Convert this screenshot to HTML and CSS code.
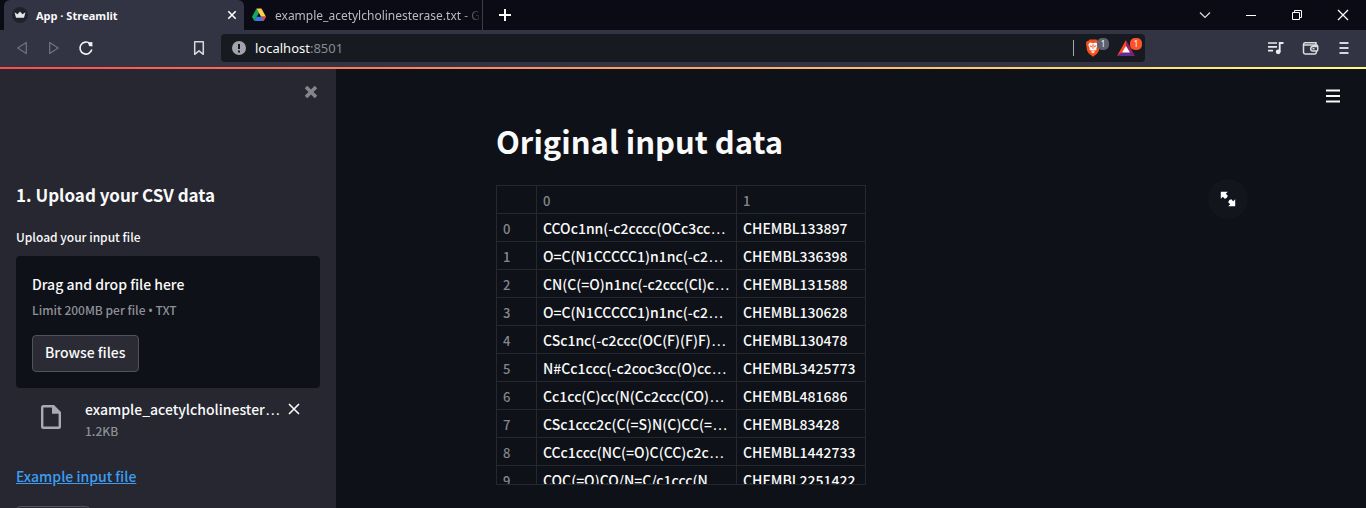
FILE: index.html
```html
<!DOCTYPE html>
<html lang="en">
<head>
<meta charset="utf-8">
<title>App · Streamlit</title>
<link rel="stylesheet" href="styles.css">
</head>
<body>
<header class="browser">
  <div class="tabstrip">
    <div class="tab tab-active">
      <svg class="favicon" width="16" height="16" viewBox="0 0 16 16"><circle cx="8" cy="8" r="8" fill="#20222b"/><path d="M2.500 5.200l3 2.100L8 4.500l2.500 2.800 3-2.100L12 10.800H4z" fill="#e4e4e8"/></svg>
      <span class="tab-title">App · Streamlit</span>
      <button class="icon-btn tab-close" aria-label="Close tab"><svg width="10" height="10" viewBox="0 0 10 10"><path d="M1.300 1.300l7.400 7.400M8.700 1.300L1.300 8.700" stroke="#fff" stroke-width="1.600"/></svg></button>
    </div>
    <div class="tab tab-idle">
      <svg class="favicon" width="16" height="16" viewBox="0 0 16 16"><path d="M5.500 1.500L1 9.700l2.400 4.200 4.600-8z" fill="#11a861"/><path d="M5.500 1.500h4.900L15 9.700h-4.900z" fill="#ffcf48"/><path d="M5.700 9.700H15l-2.500 4.200H3.400z" fill="#3b78e7"/><path d="M10.100 9.700H15l-2.500 4.200z" fill="#ea4335"/></svg>
      <span class="tab-title">example_acetylcholinesterase.txt - Goo</span>
    </div>
    <button class="icon-btn new-tab" aria-label="New tab"><svg width="14" height="14" viewBox="0 0 14 14"><path d="M7 1v12M1 7h12" stroke="#fff" stroke-width="2"/></svg></button>
    <div class="window-controls">
      <button class="icon-btn" aria-label="Search tabs"><svg width="12" height="12" viewBox="0 0 12 12"><path d="M1 3.500l5 5 5-5" fill="none" stroke="#ddd" stroke-width="1.200"/></svg></button>
      <button class="icon-btn" aria-label="Minimize"><svg width="12" height="12" viewBox="0 0 12 12"><path d="M1 6.500h10" stroke="#fff"/></svg></button>
      <button class="icon-btn" aria-label="Restore"><svg width="12" height="12" viewBox="0 0 12 12"><path d="M1.500 3.500h7v7h-7zM3.500 3.500v-2h7v7h-2" fill="none" stroke="#fff"/></svg></button>
      <button class="icon-btn" aria-label="Close"><svg width="12" height="12" viewBox="0 0 12 12"><path d="M1 1l10 10M11 1L1 11" stroke="#fff" stroke-width="1.300"/></svg></button>
    </div>
  </div>
  <div class="toolbar">
    <div class="nav">
      <button class="icon-btn" aria-label="Back"><svg width="16" height="16" viewBox="0 0 16 16"><path d="M12.300 2.500v11L3.700 8z" fill="none" stroke="#6f717d" stroke-width="1.300" stroke-linejoin="round"/></svg></button>
      <button class="icon-btn" aria-label="Forward"><svg width="16" height="16" viewBox="0 0 16 16"><path d="M3.700 2.500v11L12.300 8z" fill="none" stroke="#6f717d" stroke-width="1.300" stroke-linejoin="round"/></svg></button>
      <button class="icon-btn" aria-label="Reload"><svg width="16" height="16" viewBox="0 0 16 16"><path d="M12 3.600A6 6 0 1 0 13.800 9.500" fill="none" stroke="#f2f2f5" stroke-width="1.600"/><path d="M10 2.600l4.400-.6v4.500l-3.400-.5z" fill="#f2f2f5"/></svg></button>
    </div>
    <button class="icon-btn" aria-label="Bookmark"><svg width="16" height="16" viewBox="0 0 16 16"><path d="M3.700 1.700h8.600v12.600L8 10.800l-4.300 3.500z" fill="none" stroke="#d8d9df" stroke-width="1.500" stroke-linejoin="round"/></svg></button>
    <div class="address">
      <svg width="14" height="14" viewBox="0 0 14 14"><circle cx="7" cy="7" r="7" fill="#a2a4ad"/><path d="M7 3v5M7 9.500v2" stroke="#17191f" stroke-width="2"/></svg>
      <span class="url">localhost<span class="port">:8501</span></span>
      <span class="divider"></span>
      <button class="icon-btn shield" aria-label="Brave Shields"><svg width="16" height="18" viewBox="0 0 16 18"><path d="M4.500.5h7l1.300 1.400 1.500.2.700 2.700-1 6.600-1.800 3.200L8 17.800l-4.200-3.200L2 11.400 1 4.800l.700-2.700 1.500-.2z" fill="#f4511e"/><path d="M4.800 3.600L8 4.200l3.200-.6 1.500 2.200-1.400 3.500.2 1.500-2.200 1.100.6 1L8 14.300l-1.900-1.400.6-1-2.200-1.100.2-1.500-1.400-3.500z" fill="#fff"/><path d="M4.300 6.300l2.800.8-.8 1.500zM11.700 6.300l-2.800.8.8 1.500zM7.400 5.300h1.200L8.400 10h-.8zM6 11l2 .8 2-.8-.700 1.200H6.700z" fill="#f4511e"/></svg><span class="badge">1</span></button>
      <button class="icon-btn rewards" aria-label="Brave Rewards"><svg width="18" height="16" viewBox="0 0 18 16"><path d="M9 0L0 16l9-6z" fill="#ff4724"/><path d="M9 0l9 16-9-6z" fill="#9e1f63"/><path d="M0 16h18l-9-6z" fill="#662d91"/><path d="M9 6l4 6.500H5z" fill="#fff"/></svg><span class="badge badge-alert">1</span></button>
    </div>
    <div class="actions">
      <button class="icon-btn" aria-label="Media"><svg width="18" height="16" viewBox="0 0 18 16"><path d="M2 3h9M2 6.800h9M2 10.700h5" stroke="#ececf0" stroke-width="1.700"/><path d="M13.700 12V3H17.500" fill="none" stroke="#ececf0" stroke-width="1.800"/><circle cx="12.200" cy="11.800" r="2.400" fill="#ececf0"/></svg></button>
      <button class="icon-btn" aria-label="Wallet"><svg width="18" height="16" viewBox="0 0 18 16"><path d="M14 5V2.800H3.200a1.700 1.700 0 0 0-1.700 1.700v7.800A1.700 1.700 0 0 0 3.200 14h9.600a1.500 1.500 0 0 0 1.500-1.500V11M1.700 5h12.800a1.200 1.200 0 0 1 1.200 1.200v3.600a1.200 1.200 0 0 1-1.200 1.200h-3.500a2.300 2.300 0 0 1 0-4.600h4.500M10.500 8.700h2" fill="none" stroke="#dcdde2" stroke-width="1.500"/></svg></button>
      <button class="icon-btn" aria-label="Browser menu"><svg width="12" height="14" viewBox="0 0 12 14"><path d="M1.500 2h9M1.500 7h9M1.500 12h9" stroke="#d6d7dc" stroke-width="1.800"/></svg></button>
    </div>
  </div>
</header>
<div class="app">
  <aside class="sidebar">
    <div class="sidebar-top"><button class="icon-btn" aria-label="Close sidebar"><svg width="14" height="14" viewBox="0 0 14 14"><path d="M2 2l10 10M12 2L2 12" stroke="#85858d" stroke-width="3.600"/></svg></button></div>
    <h2 class="side-heading">1. Upload your CSV data</h2>
    <label class="side-label" for="browse">Upload your input file</label>
    <section class="dropzone">
      <span class="drop-title">Drag and drop file here</span>
      <small class="drop-note">Limit 200MB per file <span class="bullet">•</span> TXT</small>
      <button class="btn" id="browse">Browse files</button>
    </section>
    <div class="file">
      <svg class="file-icon" width="20" height="24" viewBox="0 0 20 24"><path d="M2.500 0H13l7 7v14.500a2.500 2.500 0 0 1-2.500 2.500h-15A2.500 2.500 0 0 1 0 21.500v-19A2.500 2.500 0 0 1 2.500 0z" fill="#a9aab8"/><path d="M2.400 2.400H11v6.400h6.600v12.800H2.400z" fill="#262730"/></svg>
      <div class="file-text">
        <span class="file-name">example_acetylcholinester<span class="more">…</span></span>
        <small class="file-size">1.2KB</small>
      </div>
      <button class="icon-btn file-remove" aria-label="Remove file"><svg width="12" height="12" viewBox="0 0 12 12"><path d="M1 1l10 10M11 1L1 11" stroke="#fafafa" stroke-width="1.600"/></svg></button>
    </div>
    <a class="example" href="#">Example input file</a>
    <button class="btn predict">Predict</button>
  </aside>
  <main class="main">
    <button class="icon-btn app-menu" aria-label="App menu"><svg width="14" height="14" viewBox="0 0 14 14"><path d="M0 1.500h14M0 7h14M0 12.500h14" stroke="#fafafa" stroke-width="1.800"/></svg></button>
    <div class="block">
      <h1 class="title">Original input data</h1>
      <div class="frame">
        <div class="scroller">
          <table class="data">
            <thead><tr><th class="idx"></th><th class="smiles">0</th><th class="name">1</th></tr></thead>
            <tbody>
              <tr><th>0</th><td>CCOc1nn(-c2cccc(OCc3cc<span class="more">…</span></td><td>CHEMBL133897</td></tr>
              <tr><th>1</th><td>O=C(N1CCCCC1)n1nc(-c2<span class="more">…</span></td><td>CHEMBL336398</td></tr>
              <tr><th>2</th><td>CN(C(=O)n1nc(-c2ccc(Cl)c<span class="more">…</span></td><td>CHEMBL131588</td></tr>
              <tr><th>3</th><td>O=C(N1CCCCC1)n1nc(-c2<span class="more">…</span></td><td>CHEMBL130628</td></tr>
              <tr><th>4</th><td>CSc1nc(-c2ccc(OC(F)(F)F)<span class="more">…</span></td><td>CHEMBL130478</td></tr>
              <tr><th>5</th><td>N#Cc1ccc(-c2coc3cc(O)cc<span class="more">…</span></td><td>CHEMBL3425773</td></tr>
              <tr><th>6</th><td>Cc1cc(C)cc(N(Cc2ccc(CO)<span class="more">…</span></td><td>CHEMBL481686</td></tr>
              <tr><th>7</th><td>CSc1ccc2c(C(=S)N(C)CC(=<span class="more">…</span></td><td>CHEMBL83428</td></tr>
              <tr><th>8</th><td>CCc1ccc(NC(=O)C(CC)c2c<span class="more">…</span></td><td>CHEMBL1442733</td></tr>
              <tr><th>9</th><td>COC(=O)CO/N=C/c1ccc(N<span class="more">…</span></td><td>CHEMBL2251422</td></tr>
            </tbody>
          </table>
        </div>
        <button class="icon-btn expand" aria-label="View fullscreen"><svg width="16" height="16" viewBox="0 0 16 16"><path d="M.8.8h7L5.800 2.800l2.200 2.200-1 1 .2.200-1 1-.2-.2-1 1-2.200-2.200L.8 7.800zM15.200 15.200h-7l2-2L8 11l1-1-.2-.2 1-1 .2.200 1-1 2.200 2.200 2-2z" fill="#fff"/></svg></button>
      </div>
    </div>
  </main>
</div>
</body>
</html>
```
FILE: styles.css
```css
* { box-sizing: border-box; }

body {
  margin: 0;
  height: 100vh;
  display: flex;
  flex-direction: column;
  overflow: hidden;
  background: #0e1117;
  color: #fafafa;
  font-family: "Noto Sans CJK SC", "Noto Sans", sans-serif;
  font-size: 14px;
  font-weight: 500;
}

button { font: inherit; color: inherit; }

svg { display: block; flex: none; }

.icon-btn {
  display: flex;
  align-items: center;
  justify-content: center;
  flex: none;
  padding: 0;
  border: 0;
  background: none;
}

/* Browser window */
.browser {
  flex: none;
  background: #323443;
  font-family: "Noto Sans", sans-serif;
  font-size: 12px;
  font-weight: 400;
}

.tabstrip {
  display: flex;
  align-items: center;
  height: 30px;
  padding-left: 4px;
  background: #0b0b16;
}

.tab {
  display: flex;
  align-items: center;
  gap: 8px;
  height: 30px;
  width: 239px;
  padding: 0 8px;
  white-space: nowrap;
}

.tab-active {
  width: 240px;
  border-radius: 6px 6px 0 0;
  background: #323443;
  font-family: "Open Sans", sans-serif;
  font-weight: 700;
  font-size: 11px;
}

.tab-close { margin-left: auto; width: 8px; }

.tab-idle {
  color: #b9bac1;
  border-right: 1px solid #3c3d48;
  padding: 0 0 0 7px;
  height: 30px;
}

.tab-idle .tab-title {
  flex: 1;
  overflow: hidden;
  -webkit-mask-image: linear-gradient(90deg, #000 90%, transparent);
  mask-image: linear-gradient(90deg, #000 90%, transparent);
}

.new-tab { width: 44px; }

.window-controls {
  display: flex;
  margin-left: auto;
}

.window-controls .icon-btn { width: 46px; height: 28px; }

.toolbar {
  display: flex;
  align-items: center;
  height: 37px;
  padding: 0 16px 2px 14px;
}

.nav {
  display: flex;
  gap: 16px;
  margin-right: 97px;
}

.address {
  display: flex;
  align-items: center;
  flex: 1;
  height: 28px;
  margin-left: 14px;
  padding: 0 2px 0 11px;
  border-radius: 4px;
  background: #181a21;
}

.url {
  flex: 1;
  margin-left: 9px;
  font-size: 13px;
}

.port { color: #888a93; }

.divider { width: 1px; height: 16px; background: #a7a8b0; }

.shield, .rewards { position: relative; margin-left: 11px; }
.rewards { width: 26px; justify-content: flex-start; margin-left: 16px; }

.badge {
  position: absolute;
  top: -1px;
  left: 12px;
  min-width: 12px;
  height: 12px;
  border-radius: 5px;
  background: #5d606f;
  color: #fff;
  font-size: 8px;
  line-height: 12px;
}

.badge-alert { top: -2px; left: 13px; background: #fb542b; }

.actions {
  display: flex;
  gap: 18px;
  margin-left: 121px;
}

/* Application */
.app {
  position: relative;
  display: flex;
  flex: 1;
  min-height: 0;
}

.app::before {
  content: "";
  position: absolute;
  inset: 0 0 auto;
  height: 2px;
  background: linear-gradient(90deg, #ff4b4b, #fffd80);
}

.sidebar {
  display: flex;
  flex-direction: column;
  align-items: flex-start;
  flex: none;
  width: 336px;
  padding: 16px;
  overflow: hidden;
  background: #262730;
}

.sidebar-top {
  align-self: stretch;
  display: flex;
  justify-content: flex-end;
  height: 96px;
  padding: 2px;
  flex: none;
}

.sidebar-top .icon-btn { height: 14px; }

.side-heading {
  margin: 0 0 16px;
  font-size: 17px;
  line-height: 32px;
  font-weight: 700;
}

.side-label {
  margin-bottom: 9px;
  font-size: 12px;
  line-height: 20px;
}

.dropzone {
  display: flex;
  flex-direction: column;
  align-items: flex-start;
  align-self: stretch;
  flex: none;
  padding: 16px;
  border-radius: 4px;
  background: #0e1117;
}

.drop-title { line-height: 24px; }

.drop-note, .file-size {
  color: #8f9097;
  font-size: 12px;
  line-height: 20px;
}

.drop-note { margin: 4px 0 14px; }

.bullet { font-family: "Noto Sans", sans-serif; }

.btn {
  flex: none;
  height: 37px;
  padding: 0 12px 3px;
  border: 1px solid #51525b;
  border-radius: 4px;
  background: #2b2b35;
}

.file {
  display: flex;
  align-items: flex-start;
  align-self: stretch;
  flex: none;
  padding: 9px 20px 0 25px;
}

.file-icon { margin-top: 8px; }

.file-text {
  display: flex;
  flex-direction: column;
  flex: 1;
  min-width: 0;
  margin-left: 24px;
}

.file-name { line-height: 24px; white-space: nowrap; }

.file-remove { height: 24px; }

.more {
  font-family: "Liberation Sans", sans-serif;
  font-size: 16px;
  line-height: 16px;
}

.example {
  margin: 23px 0 18px;
  color: #3d9df3;
  line-height: 24px;
}

.main {
  position: relative;
  flex: 1;
  min-width: 0;
  padding: 46px 22px 0 16px;
}

.app-menu {
  position: absolute;
  top: 22px;
  right: 26px;
}

.block {
  max-width: 704px;
  margin: 0 auto;
}

.title {
  margin: 0 0 16px;
  font-size: 31px;
  line-height: 56px;
  font-weight: 700;
}

.frame { position: relative; }

.scroller {
  width: 370px;
  height: 300px;
  overflow: hidden;
  border: 1px solid #262830;
}

.data {
  width: 100%;
  table-layout: fixed;
  border-collapse: separate;
  border-spacing: 0;
}

.data th, .data td {
  height: 28px;
  padding: 2px 6px 0;
  border-right: 1px solid #262830;
  border-bottom: 1px solid #262830;
  line-height: 24px;
  text-align: left;
  font-weight: 500;
  white-space: nowrap;
}

.data td { padding: 0 6px; }

.data th { color: #85878e; font-size: 13px; }

.data th:last-child, .data td:last-child { border-right: 0; }

.idx { width: 40px; }
.smiles { width: 200px; }

.expand {
  position: absolute;
  top: -6px;
  right: -48px;
  width: 40px;
  height: 40px;
  border-radius: 50%;
  background: #13151c;
}
```
